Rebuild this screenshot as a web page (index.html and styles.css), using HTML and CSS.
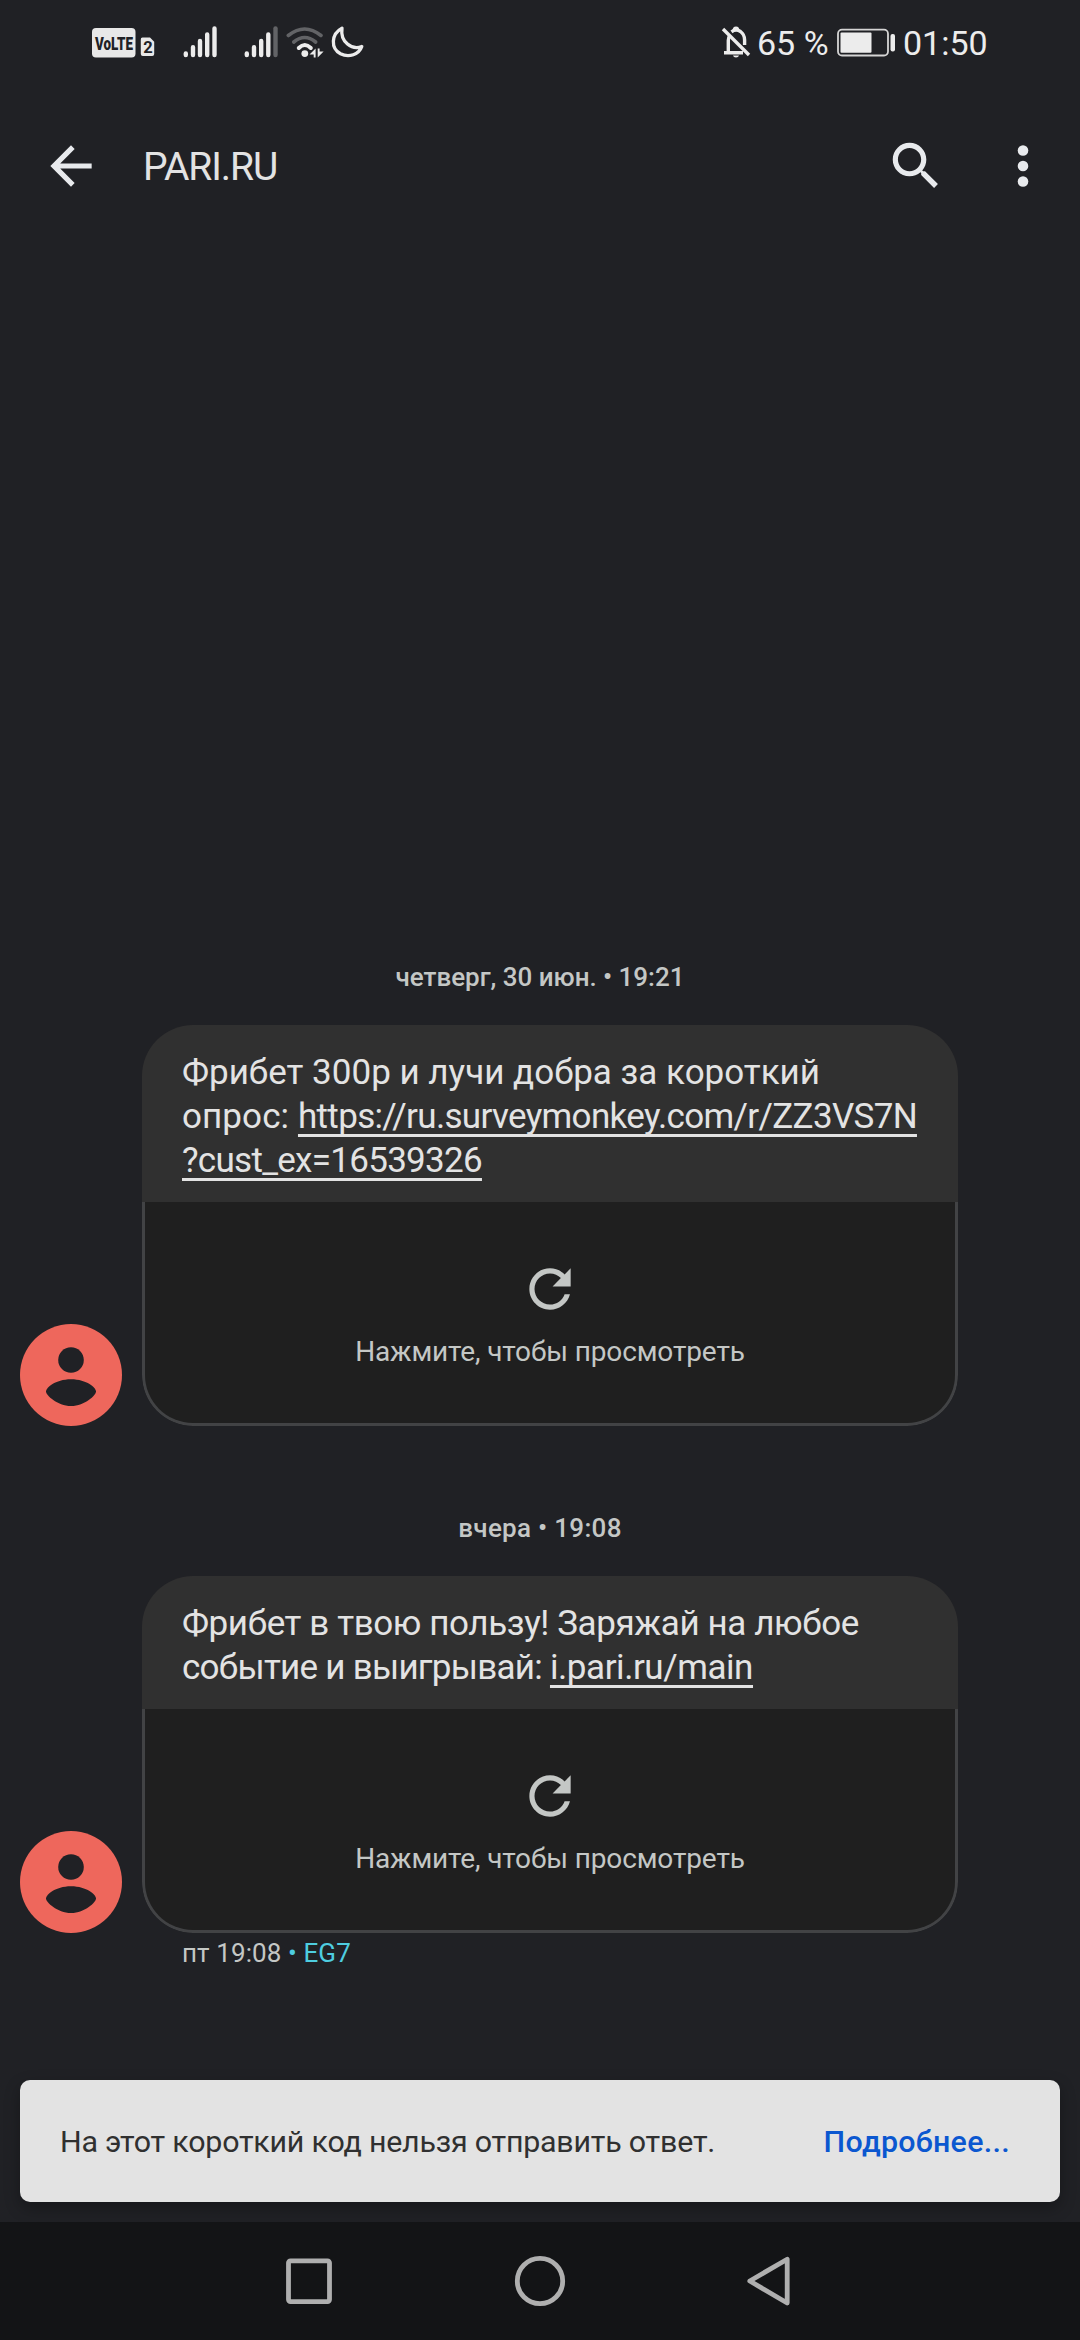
FILE: index.html
```html
<!DOCTYPE html>
<html lang="ru">
<head>
<meta charset="utf-8">
<title>PARI.RU</title>
<link rel="stylesheet" href="styles.css">
</head>
<body>
<header class="status">
  <div class="status-left">
    <svg class="volte" width="44" height="40" viewBox="92 23 44 40">
      <rect x="92" y="28" width="43.500" height="29.500" rx="4" fill="#e8e8e8"/>
      <text x="95" y="49.500" font-size="18.500" font-weight="900" textLength="38" lengthAdjust="spacingAndGlyphs" fill="#202125">VoLTE</text>
    </svg>
    <svg class="sim-slot" width="15" height="40" viewBox="140 23 15 40">
      <path d="M143 37.500h7l4.200 4.200v12.300a2 2 0 0 1-2 2h-9.400a2 2 0 0 1-2-2v-14.300a2 2 0 0 1 2.200-2.200z" fill="#e8e8e8"/>
      <text x="143.200" y="53" font-size="16.500" font-weight="700" fill="#202125">2</text>
    </svg>
    <svg class="signal" width="35" height="40" viewBox="183 23 35 40" stroke="#ececec" stroke-width="4.400" stroke-linecap="round">
      <path d="M185.800 53.400v1.600M193 47.200v7.800M200 41v14M207.200 34.500v20.500M214.500 28.500v26.500"/>
    </svg>
    <svg class="signal-two" width="35" height="40" viewBox="244 23 35 40" stroke="#ececec" stroke-width="4.400" stroke-linecap="round">
      <path d="M246.800 53.400v1.600M254 47.200v7.800M261.200 41v14M268.300 34.500v20.500"/>
      <path d="M275.500 28.500v26.500" stroke="#626366"/>
    </svg>
    <svg class="wifi" width="38" height="40" viewBox="286 23 38 40" fill="none" stroke-width="3.600" stroke-linecap="round">
      <path d="M288.300 35.500Q304.600 22.500 321 35.500M293.800 42Q304.600 33 315.600 42" stroke="#626366"/>
      <path d="M298.800 48Q304.800 42 310.800 48" stroke="#ececec" stroke-width="4"/>
      <circle cx="304.800" cy="53.600" r="3.400" fill="#ececec"/>
      <path d="M315.600 48.600v8.800h-1.900v-2.800h-4.200zM317.700 57.400v-8.800h1.900v2.800h4z" fill="#ececec"/>
    </svg>
    <svg width="34" height="40" viewBox="331 23 34 40" fill="none" stroke="#ececec" stroke-width="3.300" stroke-linejoin="round">
      <path d="M342 28.200C331 34 330.500 48.500 340.500 53.800C349 58 359 54.500 361.800 46.500C352 50.500 340 42 342 28.200z"/>
    </svg>
  </div>
  <div class="status-right">
    <svg width="30" height="40" viewBox="721 23 30 40" fill="none" stroke="#ececec" stroke-width="3.400">
      <path d="M723 29L749 55"/>
      <path d="M724 52.800H743M728.300 52V40.500Q728.300 37.800 729.500 36M731.500 31.800Q736 28.500 740.500 31.500Q744.600 34.500 744.600 40V45"/>
      <path d="M734 30.500q0-2.700 2-2.700t2 2.700" stroke-width="2.800"/>
      <path d="M733 55.500h6q-.5 2-3 2t-3-2z" fill="#ececec" stroke="none"/>
    </svg>
    <span class="percent">65 %</span>
    <svg class="battery" width="59" height="40" viewBox="837 23 59 40">
      <rect x="838" y="29.700" width="50" height="25.800" rx="4" fill="none" stroke="#d5d5d5" stroke-width="1.800"/>
      <rect x="840.500" y="32.500" width="31" height="20.300" rx="1" fill="#ececec"/>
      <rect x="890.500" y="34" width="4.500" height="17.500" rx="2" fill="#ececec"/>
    </svg>
    <span class="clock">01:50</span>
  </div>
</header>

<nav class="appbar">
  <svg class="icon" viewBox="0 0 24 24"><path d="M20 11H7.830l5.590-5.590L12 4l-8 8 8 8 1.410-1.410L7.830 13H20v-2z"/></svg>
  <h1 class="title">PARI.RU</h1>
  <svg class="icon" viewBox="0 0 24 24"><path d="M15.500 14h-.79l-.28-.27C15.410 12.590 16 11.110 16 9.500 16 5.910 13.090 3 9.500 3S3 5.910 3 9.500 5.910 16 9.500 16c1.610 0 3.090-.59 4.230-1.570l.27.28v.79l5 4.990L20.490 19l-4.990-5zm-6 0C7.010 14 5 11.990 5 9.500S7.010 5 9.500 5 14 7.010 14 9.500 11.990 14 9.500 14z"/></svg>
  <svg class="icon more" viewBox="0 0 24 24"><circle cx="12" cy="6" r="2.050"/><circle cx="12" cy="12" r="2.050"/><circle cx="12" cy="18" r="2.050"/></svg>
</nav>

<main class="chat">
  <div class="date">четверг, 30 июн. • 19:21</div>
  <section class="row">
    <svg class="avatar" viewBox="0 0 102 102"><circle cx="51" cy="51" r="51" fill="#ee675c"/><circle cx="51" cy="36" r="12.800" fill="#202125"/><path d="M26 67.500C26 64 35 55.300 51 55.300S76 64 76 67.500 65 82 51 82 26 71 26 67.500z" fill="#202125"/></svg>
    <article class="bubble">
      <p class="text">Фрибет 300р и лучи добра за короткий<br><span class="lead-a">опрос: </span><a class="link url-a">https://ru.surveymonkey.com/r/ZZ3VS7N</a><br><a class="link url-b">?cust_ex=16539326</a></p>
      <div class="preview">
        <svg class="refresh" viewBox="0 0 24 24"><path d="M17.650 6.350C16.200 4.900 14.210 4 12 4c-4.420 0-7.990 3.580-7.990 8s3.570 8 7.990 8c3.730 0 6.840-2.550 7.730-6h-2.080c-.82 2.330-3.040 4-5.650 4-3.310 0-6-2.690-6-6s2.690-6 6-6c1.660 0 3.140.69 4.220 1.780L13 11h7V4l-2.350 2.350z"/></svg>
        <span class="hint">Нажмите, чтобы просмотреть</span>
      </div>
    </article>
  </section>

  <div class="date second">вчера • 19:08</div>
  <section class="row">
    <svg class="avatar" viewBox="0 0 102 102"><circle cx="51" cy="51" r="51" fill="#ee675c"/><circle cx="51" cy="36" r="12.800" fill="#202125"/><path d="M26 67.500C26 64 35 55.300 51 55.300S76 64 76 67.500 65 82 51 82 26 71 26 67.500z" fill="#202125"/></svg>
    <article class="bubble">
      <p class="text"><span class="lead-b">Фрибет в твою пользу! Заряжай на любое</span><br><span class="lead-c">событие и выигрывай: </span><a class="link url-c">i.pari.ru/main</a></p>
      <div class="preview">
        <svg class="refresh" viewBox="0 0 24 24"><path d="M17.650 6.350C16.200 4.900 14.210 4 12 4c-4.420 0-7.990 3.580-7.990 8s3.570 8 7.990 8c3.730 0 6.840-2.550 7.730-6h-2.080c-.82 2.330-3.040 4-5.650 4-3.310 0-6-2.690-6-6s2.690-6 6-6c1.660 0 3.140.69 4.220 1.780L13 11h7V4l-2.350 2.350z"/></svg>
        <span class="hint">Нажмите, чтобы просмотреть</span>
      </div>
    </article>
  </section>
  <div class="meta">пт 19:08 <span class="sim">• EG7</span></div>
</main>

<aside class="snackbar">
  <span class="notice">На этот короткий код нельзя отправить ответ.</span>
  <a class="action">Подробнее...</a>
</aside>

<footer class="keys">
  <svg width="540" height="60" viewBox="270 2251 540 60" fill="none" stroke="#afafaf" stroke-width="4.800" stroke-linejoin="round">
    <rect x="288.500" y="2260.800" width="41" height="40.800" rx="2"/>
    <circle cx="540" cy="2281" r="22.700"/>
    <path d="M787.200 2259.200V2303L749.800 2281z"/>
  </svg>
</footer>
</body>
</html>
```
FILE: styles.css
```css
* { box-sizing: border-box; }

body {
  margin: 0;
  width: 1080px;
  height: 2340px;
  display: flex;
  flex-direction: column;
  overflow: hidden;
  background: #202125;
  color: #e3e3e3;
  font-family: Roboto, "Noto Sans", sans-serif;
}

svg { display: block; flex: none; }

.status {
  height: 84px;
  padding: 23px 92px 0;
  display: flex;
  justify-content: space-between;
  color: #ececec;
  font-size: 34px;
  line-height: 40px;
}
.status-left, .status-right { display: flex; }
.volte { margin-right: 4px; }
.sim-slot { margin-right: 28px; }
.signal { margin-right: 26px; }
.signal-two { margin-right: 7px; }
.wifi { margin-right: 7px; }
.percent { width: 80px; margin-left: 6px; }
.clock { width: 85px; margin-left: 7px; }

.appbar {
  height: 164px;
  padding: 0 26px 0 40px;
  display: flex;
  align-items: center;
}
.icon { width: 62px; height: 62px; fill: #e8eaed; }
.more { margin-left: 45px; }
.title {
  flex: 1;
  margin: 0 0 0 41px;
  padding-top: 1px;
  font-size: 39px;
  font-weight: 400;
  line-height: 46px;
  letter-spacing: -1.05px;
}

.chat { flex: 1; padding-top: 714px; }

.date {
  margin-bottom: 33px;
  color: #c4c7c5;
  font-size: 26px;
  font-weight: 500;
  line-height: 30px;
  text-align: center;
  letter-spacing: -0.03px;
}
.second { margin-top: 87px; letter-spacing: 0.3px; }

.row {
  display: flex;
  align-items: flex-end;
  gap: 20px;
  padding-left: 20px;
}
.avatar { width: 102px; height: 102px; }

.bubble { width: 816px; border-radius: 51px; overflow: hidden; }
.text {
  margin: 0;
  padding: 26px 20px 19px 40px;
  background: #303030;
  font-size: 35px;
  line-height: 44px;
  white-space: nowrap;
}
.link {
  text-decoration: underline 3px;
  text-underline-offset: 6px;
  text-decoration-skip-ink: none;
}
.lead-a { letter-spacing: 0.1px; }
.lead-b { letter-spacing: -0.4px; }
.lead-c { letter-spacing: -0.73px; }
.url-a { letter-spacing: -0.667px; }
.url-b { letter-spacing: -0.706px; }
.url-c { letter-spacing: -0.44px; }

.preview {
  height: 224px;
  padding-top: 56px;
  display: flex;
  flex-direction: column;
  align-items: center;
  gap: 15px;
  background: #1f1f1f;
  border: 3px solid #424345;
  border-top: 0;
  border-radius: 0 0 51px 51px;
}
.refresh { width: 62px; height: 62px; fill: #c4c7c5; }
.hint {
  color: #c4c7c5;
  font-size: 28px;
  line-height: 34px;
  letter-spacing: -0.13px;
}

.meta {
  margin: 5px 0 0 182px;
  color: #c4c7c5;
  font-size: 26px;
  line-height: 30px;
  letter-spacing: 0.1px;
}
.sim { color: #4ecde0; }

.snackbar {
  height: 122px;
  margin: 0 20px 20px;
  padding: 2px 50px 0 40px;
  display: flex;
  align-items: center;
  justify-content: space-between;
  border-radius: 10px;
  background: #e3e3e3;
  box-shadow: 0 6px 16px rgba(0, 0, 0, 0.3);
  color: #303030;
  font-size: 30.4px;
  line-height: 36px;
}
.notice { letter-spacing: -0.22px; }
.action { color: #0b57d0; font-weight: 500; letter-spacing: 0.3px; }

.keys {
  height: 118px;
  display: flex;
  justify-content: center;
  align-items: center;
  background: #131416;
}
```
